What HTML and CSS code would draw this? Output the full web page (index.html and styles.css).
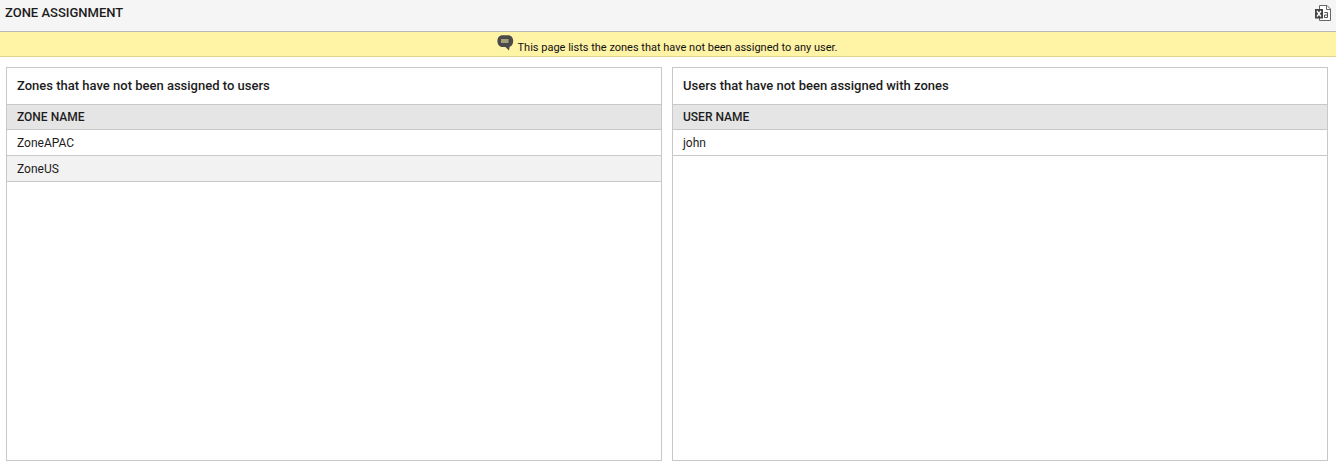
FILE: index.html
```
<!DOCTYPE html>
<html lang="en">
<head>
<meta charset="utf-8">
<title>Zone Assignment</title>
<link rel="stylesheet" href="styles.css">
</head>
<body>
<header class="topbar">
  <h1 class="page-title">ZONE ASSIGNMENT</h1>
  <svg class="excel-icon" width="17" height="17" viewBox="0 0 17 17" aria-hidden="true">
    <path d="M4.5 4V0.5H12L15.5 4V15.5H4.5V13" fill="#fff" stroke="#666" stroke-width="1"/>
    <path d="M11.5 0.5V4.5H15.5" fill="none" stroke="#666" stroke-width="1"/>
    <rect x="0" y="4" width="8" height="9.5" fill="#444"/>
    <path d="M2 6L6 11.5M6 6L2 11.5" stroke="#fff" stroke-width="1.3" fill="none"/>
    <path d="M9.5 7.5H12.5V12.5H9.5V10H12.5" fill="none" stroke="#555" stroke-width="1"/>
  </svg>
</header>
<div class="notice">
  <svg class="notice-icon" width="17" height="17" viewBox="0 0 17 17" aria-hidden="true">
    <path d="M5.5 0.2H11C14.2 0.2 16.2 2.4 16.2 6C16.2 9.4 14.4 11.6 12.6 11.8L12 15.5L8.4 12H5.5C2.4 12 0.4 9.4 0.4 6C0.4 2.4 2.4 0.2 5.5 0.2Z" fill="#4a4a4a"/>
    <path d="M4 5H11.5M4 7H11.5" stroke="#fff3a5" stroke-width="1"/>
  </svg>
  <span class="notice-text">This page lists the zones that have not been assigned to any user.</span>
</div>
<main class="panels">
  <section class="panel">
    <h2 class="panel-title">Zones that have not been assigned to users</h2>
    <div class="col-head">ZONE NAME</div>
    <div class="row">ZoneAPAC</div>
    <div class="row row-alt">ZoneUS</div>
  </section>
  <section class="panel">
    <h2 class="panel-title">Users that have not been assigned with zones</h2>
    <div class="col-head">USER NAME</div>
    <div class="row">john</div>
  </section>
</main>
</body>
</html>
```
FILE: styles.css
```
* { box-sizing: border-box; }
html, body { margin: 0; height: 100%; }
body {
  background: #fff;
  color: #1c1c1c;
  font-family: Roboto, "Liberation Sans", sans-serif;
  font-size: 12px;
  overflow: hidden;
}
.topbar {
  height: 32px;
  background: #f5f5f5;
  border-bottom: 1px solid #b9b9b9;
  display: flex;
  align-items: center;
  justify-content: space-between;
  padding: 0 4px 5px 5px;
}
.page-title { margin: 0; font-size: 13px; font-weight: 500; line-height: 16px; color: #1c1c1c; }
.excel-icon { display: block; margin-top: 1px; }
.notice {
  height: 25px;
  background: #fff3a5;
  border-bottom: 1px solid #e0d58c;
  display: flex;
  justify-content: center;
  align-items: flex-start;
  gap: 4px;
  padding-top: 3px;
  padding-right: 2px;
}
.notice-icon { display: block; flex: none; }
.notice-text { font-size: 11px; line-height: 13px; margin-top: 6px; color: #111; }
.panels {
  display: grid;
  grid-template-columns: 656px 656px;
  gap: 10px;
  padding: 10px 8px 0 6px;
}
.panel { height: 394px; border: 1px solid #c8c8c8; background: #fff; }
.panel-title {
  margin: 0;
  height: 36px;
  padding: 0 10px;
  font-size: 13px;
  font-weight: 500;
  line-height: 36px;
  color: #1c1c1c;
}
.col-head {
  height: 26px;
  padding: 0 10px;
  background: #e5e5e5;
  border-top: 1px solid #c8c8c8;
  border-bottom: 1px solid #c8c8c8;
  font-size: 12px;
  font-weight: 500;
  line-height: 24px;
}
.row {
  height: 26px;
  padding: 0 10px;
  border-bottom: 1px solid #c8c8c8;
  line-height: 27px;
  font-size: 12px;
}
.row-alt { background: #f2f2f2; }
```
